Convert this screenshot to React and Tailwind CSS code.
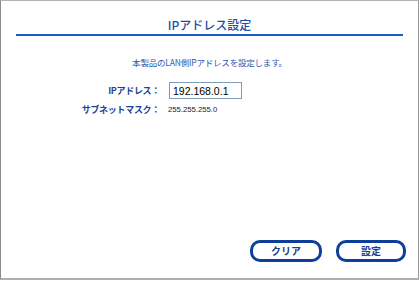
import React, { useState } from "react";

export default function App() {
  const [ip, setIp] = useState("192.168.0.1");

  return (
    <div className="w-[420px] h-[281px] bg-white">
      <div
        className="flex h-[280px] w-[419px] flex-col border-t border-r border-l border-b-2 border-t-[#b4b4b4] border-l-[#8c8c8c] border-r-[#9a9a9a] border-b-[#b0b0b0]"
        style={{ fontFamily: '"Noto Sans CJK JP", "Liberation Sans", sans-serif' }}
      >
        {/* タイトル */}
        <div className="flex h-[33px] items-end justify-center pb-[1px]">
          <h1 className="text-[12px] font-medium leading-[16px] text-[#1b4ea6]">IPアドレス設定</h1>
        </div>
        <div className="mx-[15px] h-[2px] bg-[#1e5bc6]" />

        <p className="mt-[20px] text-center text-[8.5px] leading-[12px] tracking-[-0.2px] text-[#2a5db0]">
          本製品のLAN側IPアドレスを設定します。
        </p>

        {/* 設定項目 */}
        <div className="mt-[14px] flex flex-col gap-[4px]">
          <div className="flex items-center">
            <label className="w-[162px] pr-[3px] text-right text-[9px] font-bold leading-[14px] tracking-[-0.3px] text-[#1e3f95]">
              IPアドレス：
            </label>
            <input
              value={ip}
              onChange={(e) => setIp(e.target.value)}
              className="ml-[6px] h-[17px] w-[73px] border border-[#7f9db9] px-[3px] text-[10.5px] leading-[15px] text-black outline-none"
              style={{ fontFamily: '"Liberation Sans", sans-serif' }}
            />
          </div>
          <div className="flex items-center">
            <span className="w-[162px] pr-[3px] text-right text-[9px] font-bold leading-[14px] tracking-[-0.3px] text-[#1e3f95]">
              サブネットマスク：
            </span>
            <span
              className="ml-[5px] text-[7.7px] leading-[14px] text-[#222]"
              style={{ fontFamily: '"Liberation Sans", sans-serif' }}
            >
              255.255.255.0
            </span>
          </div>
        </div>

        {/* ボタン */}
        <div className="mt-auto mb-[16px] flex justify-end gap-[14px] pr-[12px]">
          <button className="h-[22px] w-[72px] rounded-[10px] border-[3px] border-[#0d3f9a] bg-white text-[10px] font-bold leading-[14px] text-[#1a3f8e]">
            クリア
          </button>
          <button className="h-[22px] w-[70px] rounded-[10px] border-[3px] border-[#0d3f9a] bg-white text-[10px] font-bold leading-[14px] text-[#1a3f8e]">
            設定
          </button>
        </div>
      </div>
    </div>
  );
}
